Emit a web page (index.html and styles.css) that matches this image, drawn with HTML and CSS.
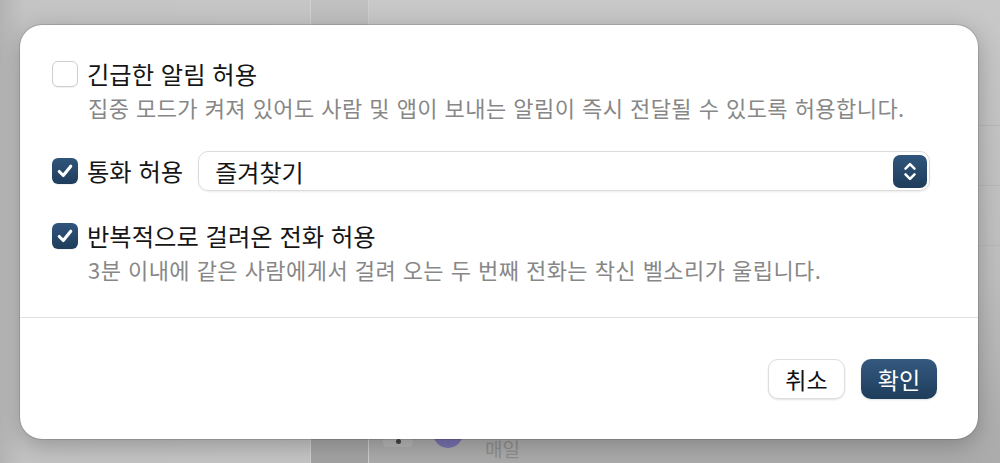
FILE: index.html
```html
<!DOCTYPE html>
<html lang="ko">
<head>
    <meta charset="utf-8">
    <title>집중 모드 허용</title>
    <link rel="stylesheet" href="styles.css">
</head>
<body>
    <div class="backdrop">
        <div class="side-col"></div>
        <div class="mid-col"></div>
        <div class="main-col">
            <div class="list-row"></div>
            <div class="list-row"></div>
            <div class="list-row"></div>
            <div class="list-row"></div>
            <div class="list-row bottom-row">
                <span class="row-toggle"><span class="row-dot"></span></span>
                <span class="row-avatar"></span>
                <span class="row-label">매일</span>
            </div>
        </div>
    </div>

    <div class="sheet">
        <div class="sheet-body">
            <div class="option">
                <label class="option-line">
                    <span class="check"></span>
                    <span class="option-title">긴급한 알림 허용</span>
                </label>
                <p class="option-desc">집중 모드가 켜져 있어도 사람 및 앱이 보내는 알림이 즉시 전달될 수 있도록 허용합니다.</p>
            </div>

            <div class="option option-calls">
                <label class="option-line">
                    <span class="check checked">
                        <svg viewBox="0 0 16 16" width="20" height="20"><path d="M3.4 8.4 L6.6 11.6 L12.6 4.2" fill="none" stroke="#fff" stroke-width="2.5" stroke-linecap="round" stroke-linejoin="round"/></svg>
                    </span>
                    <span class="option-title">통화 허용</span>
                </label>
                <div class="popup">
                    <span class="popup-value">즐겨찾기</span>
                    <span class="stepper">
                        <svg viewBox="0 0 16 22" width="18" height="25"><path d="M4 8.5 L8 4.5 L12 8.5 M4 13.5 L8 17.5 L12 13.5" fill="none" stroke="#fff" stroke-width="2.2" stroke-linecap="round" stroke-linejoin="round"/></svg>
                    </span>
                </div>
            </div>

            <div class="option">
                <label class="option-line">
                    <span class="check checked">
                        <svg viewBox="0 0 16 16" width="20" height="20"><path d="M3.4 8.4 L6.6 11.6 L12.6 4.2" fill="none" stroke="#fff" stroke-width="2.5" stroke-linecap="round" stroke-linejoin="round"/></svg>
                    </span>
                    <span class="option-title">반복적으로 걸려온 전화 허용</span>
                </label>
                <p class="option-desc">3분 이내에 같은 사람에게서 걸려 오는 두 번째 전화는 착신 벨소리가 울립니다.</p>
            </div>
        </div>

        <div class="sheet-footer">
            <button class="btn">취소</button>
            <button class="btn btn-primary">확인</button>
        </div>
    </div>
</body>
</html>
```

FILE: styles.css
```css
html, body {
    margin: 0;
    padding: 0;
    height: 100%;
    overflow: hidden;
}
body {
    font-family: "Noto Sans CJK KR", "Noto Sans", sans-serif;
    color: #1c1c1c;
    position: relative;
}

/* window behind the sheet */
.backdrop {
    display: flex;
    height: 100%;
    background: linear-gradient(180deg, #c9c9c9 0%, #bdbdbd 70%, #a9a9a9 100%);
}
.side-col {
    width: 310px;
    background: linear-gradient(90deg, #b3b3b3 0%, #c4c4c4 8%, #c6c6c6 100%);
    border-right: 1px solid #d2d2d2;
}
.mid-col {
    width: 57px;
    background: linear-gradient(180deg, #c1c0c0 0%, #b4b3b3 85%, #a3a3a3 100%);
    border-right: 1px solid #cfcfcf;
}
.main-col {
    flex: 1;
    display: flex;
    flex-direction: column;
    padding-top: 125px;
    background: linear-gradient(180deg, #c8c8c8 0%, #bebebe 60%, #ababab 100%);
}
.list-row {
    height: 59px;
    border-top: 1px solid #b8b8b8;
}
.bottom-row {
    flex: 1;
    display: flex;
    align-items: flex-end;
    padding-left: 14px;
    border-top: none;
}
.row-toggle {
    width: 30px;
    height: 12px;
    border-radius: 4px;
    background: #b7b7b7;
    margin-bottom: 16px;
    display: flex;
    align-items: center;
    justify-content: center;
}
.row-dot {
    width: 5px;
    height: 5px;
    border-radius: 50%;
    background: #444;
}
.row-avatar {
    width: 30px;
    height: 30px;
    border-radius: 50%;
    background: #7873b0;
    margin: 0 22px 15px 20px;
}
.row-label {
    font-size: 19px;
    color: #8f8f8f;
    line-height: 22px;
    margin-bottom: 3px;
}

/* the sheet */
.sheet {
    position: absolute;
    left: 20px;
    top: 25px;
    width: 958px;
    height: 414px;
    background: #fff;
    border-radius: 22px;
    box-shadow: 0 0 0 1px rgba(0,0,0,0.12), 0 6px 24px rgba(0,0,0,0.25);
    display: flex;
    flex-direction: column;
    box-sizing: border-box;
}
.sheet-body {
    padding: 35px 48px 0 32px;
    height: 293px;
    box-sizing: border-box;
    border-bottom: 1px solid #e2e2e2;
}
.option {
    margin-bottom: 31px;
}
.option-line {
    display: flex;
    align-items: center;
    gap: 9px;
}
.check {
    width: 26px;
    height: 26px;
    box-sizing: border-box;
    border-radius: 6px;
    border: 1px solid #cfcfcf;
    background: #fff;
    box-shadow: 0 1px 1px rgba(0,0,0,0.06);
    display: flex;
    align-items: center;
    justify-content: center;
}
.check.checked {
    border: none;
    background: linear-gradient(180deg, #30557b 0%, #1f3d5c 100%);
}
.option-title {
    font-size: 24.3px;
    line-height: 28px;
    color: #151515;
}
.option-desc {
    margin: 6px 0 0 36px;
    font-size: 22px;
    letter-spacing: 0.45px;
    line-height: 26px;
    color: #878787;
}

.option-calls {
    display: flex;
    align-items: center;
    gap: 15px;
}
.popup {
    flex: 1;
    height: 40px;
    box-sizing: border-box;
    border: 1px solid #dcdcdc;
    border-radius: 10px;
    box-shadow: 0 1px 2px rgba(0,0,0,0.08);
    display: flex;
    align-items: center;
    justify-content: space-between;
    padding: 0 2px 0 16px;
}
.popup-value {
    font-size: 24px;
    color: #151515;
}
.stepper {
    width: 34px;
    height: 33px;
    border-radius: 7px;
    background: linear-gradient(180deg, #30557b 0%, #1f3d5c 100%);
    display: flex;
    align-items: center;
    justify-content: center;
}

.sheet-footer {
    flex: 1;
    display: flex;
    justify-content: flex-end;
    align-items: flex-end;
    gap: 16px;
    padding: 0 41px 40px 0;
}
.btn {
    font-family: inherit;
    font-size: 23px;
    width: 77px;
    height: 40px;
    border-radius: 10px;
    border: 1px solid #dedede;
    background: #fff;
    color: #111;
    box-shadow: 0 1px 2px rgba(0,0,0,0.12);
    padding: 0;
}
.btn-primary {
    width: 76px;
    border: none;
    color: #fff;
    background: linear-gradient(180deg, #34597f 0%, #1f3d5c 100%);
}
```
